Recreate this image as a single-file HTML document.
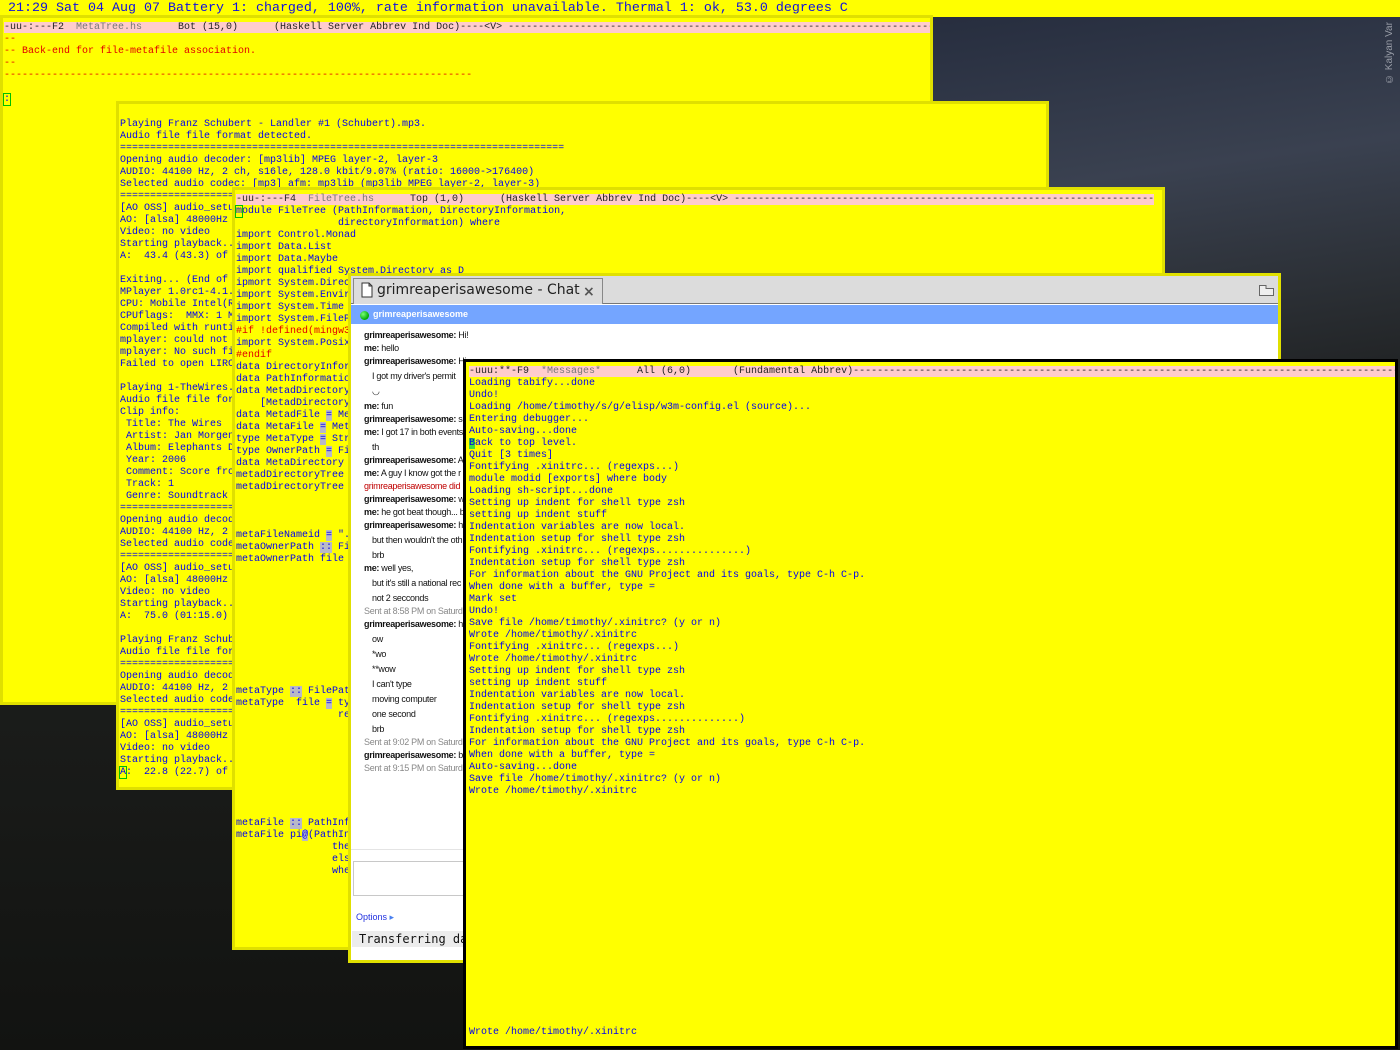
<!DOCTYPE html>
<html><head><meta charset="utf-8"><style>
*{margin:0;padding:0;box-sizing:border-box}
body{width:1400px;height:1050px;overflow:hidden;position:relative;
background:linear-gradient(172deg,#1a1f2e 0,#2a3142 180px,#3a4150 330px,#2a2e33 480px,#1a1b1a 620px,#141513 1050px);
font-family:"Liberation Mono",monospace;}
.hill{position:absolute;left:0;top:560px;width:1400px;height:490px;background:linear-gradient(180deg,#1e201e,#121311);clip-path:polygon(0 30%,10% 26%,25% 22%,40% 28%,60% 40%,80% 52%,100% 60%,100% 100%,0 100%)}
.top{position:absolute;left:0;top:0;width:1400px;height:17px;background:#ffff00;color:#1010e0;font-size:13.33px;line-height:17px;padding-left:8px;white-space:pre}
.win{position:absolute;background:#ffff00;border:3px solid #e0e000;overflow:hidden}
pre{font-family:"Liberation Mono",monospace;font-size:10px;line-height:12px;color:#0000f0;white-space:pre;position:absolute}
.ml{background:#ffcccc;color:#222}
.ml .f{color:#777}
.r{color:#e00000}
.hl{background:#b8b8c8}
.cur{outline:1px solid #00c000}
.chat{position:absolute;left:348px;top:273px;width:933px;height:690px;border:3px solid #e0e000;background:#fff;overflow:hidden}
.cm{position:absolute;left:13px;font-family:"Liberation Sans",sans-serif;font-size:9px;color:#111;white-space:nowrap;letter-spacing:-0.3px}
.cm b{font-weight:bold}
</style></head><body>
<div class="hill"></div>
<div style="position:absolute;left:1384px;top:18px;width:14px;height:66px;color:#9a9ea8;font-family:'Liberation Sans',sans-serif;font-size:10px;writing-mode:vertical-rl;transform:rotate(180deg);white-space:nowrap">© Kalyan Var</div>
<div class="top">21:29 Sat 04 Aug 07 Battery 1: charged, 100%, rate information unavailable. Thermal 1: ok, 53.0 degrees C</div>

<div class="win" style="left:0;top:15px;width:933px;height:690px">
<pre style="left:1px;top:4px"><span class="ml">-uu-:---F2  <span class="f">MetaTree.hs</span>      Bot (15,0)      (Haskell Server Abbrev Ind Doc)----&lt;V&gt; -------------------------------------------------------------------------</span>
<span class="r">--
-- Back-end for file-metafile association.
--
------------------------------------------------------------------------------</span>

<span class="cur">:</span></pre></div>

<div class="win" style="left:116px;top:101px;width:933px;height:689px">
<pre style="left:1px;top:3px">

Playing Franz Schubert - Landler #1 (Schubert).mp3.
Audio file file format detected.
==========================================================================
Opening audio decoder: [mp3lib] MPEG layer-2, layer-3
AUDIO: 44100 Hz, 2 ch, s16le, 128.0 kbit/9.07% (ratio: 16000-&gt;176400)
Selected audio codec: [mp3] afm: mp3lib (mp3lib MPEG layer-2, layer-3)
==========================================================================
[AO OSS] audio_setup: Can't open audio device /dev/dsp
AO: [alsa] 48000Hz 2ch s16le (2 bytes per sample)
Video: no video
Starting playback...
A:  43.4 (43.3) of 196.0 (03:16.0)  0.4%

Exiting... (End of file)
MPlayer 1.0rc1-4.1.2 (C) 2000-2006 MPlayer Team
CPU: Mobile Intel(R) Pentium(R) 4
CPUflags:  MMX: 1 MMX2: 1 3DNow: 0 3DNow2: 0 SSE: 1 SSE2: 1
Compiled with runtime CPU detection.
mplayer: could not connect to socket
mplayer: No such file or directory
Failed to open LIRC support.

Playing 1-TheWires.mp3.
Audio file file format detected.
Clip info:
 Title: The Wires
 Artist: Jan Morgenstern
 Album: Elephants Dream
 Year: 2006
 Comment: Score from the movie
 Track: 1
 Genre: Soundtrack
==========================================================================
Opening audio decoder: [mp3lib] MPEG layer-2, layer-3
AUDIO: 44100 Hz, 2 ch, s16le, 192.0 kbit/13.61%
Selected audio codec: [mp3] afm: mp3lib
==========================================================================
[AO OSS] audio_setup: Can't open audio device
AO: [alsa] 48000Hz 2ch s16le
Video: no video
Starting playback...
A:  75.0 (01:15.0) of 120.0

Playing Franz Schubert - Landler #1 (Schubert).mp3.
Audio file file format detected.
==========================================================================
Opening audio decoder: [mp3lib] MPEG layer-2, layer-3
AUDIO: 44100 Hz, 2 ch, s16le, 128.0 kbit/9.07%
Selected audio codec: [mp3] afm: mp3lib
==========================================================================
[AO OSS] audio_setup: Can't open audio device
AO: [alsa] 48000Hz 2ch s16le
Video: no video
Starting playback...
<span class="cur">A</span>:  22.8 (22.7) of 196.0</pre></div>

<div class="win" style="left:232px;top:187px;width:933px;height:763px">
<pre style="left:1px;top:4px"><span class="ml">-uu-:---F4  <span class="f">FileTree.hs</span>      Top (1,0)      (Haskell Server Abbrev Ind Doc)----&lt;V&gt; ----------------------------------------------------------------------</span>
<span class="cur">m</span>odule FileTree (PathInformation, DirectoryInformation,
                 directoryInformation) where
import Control.Monad
import Data.List
import Data.Maybe
import qualified System.Directory as D
ipmort System.Directory
import System.Environment
import System.Time
import System.FilePath
<span class="r">#if !defined(mingw32_HOST_OS)</span>
import System.Posix
<span class="r">#endif</span>
data DirectoryInformation
data PathInformation
data MetadDirectory
    [MetadDirectory]
data MetadFile <span class="hl">=</span> MetadFile
data MetaFile <span class="hl">=</span> MetaFile
type MetaType <span class="hl">=</span> String
type OwnerPath <span class="hl">=</span> FilePath
data MetaDirectory
metadDirectoryTree
metadDirectoryTree



metaFileNameid <span class="hl">=</span> ".meta"
metaOwnerPath <span class="hl">::</span> FilePath
metaOwnerPath file










metaType <span class="hl">::</span> FilePath
metaType  file <span class="hl">=</span> type
                 return








metaFile <span class="hl">::</span> PathInformation
metaFile pi<span class="hl">@</span>(PathInformation
                the
                else
                where</pre></div>

<div class="chat">
<div style="position:absolute;left:0;top:0;width:930px;height:28px;background:#dcdcdc;border-bottom:1px solid #777"></div>
<div style="position:absolute;left:2px;top:2px;width:250px;height:26px;background:#dcdcdc;border:1px solid #888;border-bottom:none"></div>
<svg style="position:absolute;left:10px;top:6px" width="12" height="16" viewBox="0 0 12 16"><path d="M1 1H8L11 4V15H1Z M8 1V4H11" fill="#fff" stroke="#333" stroke-width="1"/></svg>
<div style="position:absolute;left:26px;top:3px;font-family:'DejaVu Sans',sans-serif;font-size:14px;color:#222;line-height:22px">grimreaperisawesome - Chat</div>
<div style="position:absolute;left:232px;top:5px;font-family:'DejaVu Sans',sans-serif;font-size:14px;color:#555;font-weight:bold;line-height:22px">×</div>
<svg style="position:absolute;left:908px;top:9px" width="15" height="11" viewBox="0 0 15 11"><path d="M0.5 0.5H7V3.5H14.5V10.5H0.5Z" fill="#eee" stroke="#666"/></svg>
<div style="position:absolute;left:0;top:29px;width:930px;height:19px;background:#74a5ff"></div>
<div style="position:absolute;left:9px;top:35px;width:9px;height:9px;border-radius:50%;background:radial-gradient(circle at 35% 35%,#7f7,#0a0 70%)"></div>
<div style="position:absolute;left:22px;top:31px;font-family:'Liberation Sans',sans-serif;font-size:9px;font-weight:bold;color:#fff;line-height:15px">grimreaperisawesome</div>
<div class="cm" style="top:54px"><b>grimreaperisawesome:</b> Hi!</div>
<div class="cm" style="top:67px"><b>me:</b> hello</div>
<div class="cm" style="top:80px"><b>grimreaperisawesome:</b> Hi</div>
<div class="cm" style="top:95px;left:21px">I got my driver's permit</div>
<div class="cm" style="top:110px;left:21px">◡</div>
<div class="cm" style="top:125px"><b>me:</b> fun</div>
<div class="cm" style="top:138px"><b>grimreaperisawesome:</b> sc</div>
<div class="cm" style="top:151px"><b>me:</b> I got 17 in both events</div>
<div class="cm" style="top:166px;left:21px">th</div>
<div class="cm" style="top:179px"><b>grimreaperisawesome:</b> A</div>
<div class="cm" style="top:192px"><b>me:</b> A guy I know got the r</div>
<div class="cm" style="top:205px;color:#c00000">grimreaperisawesome did n</div>
<div class="cm" style="top:218px"><b>grimreaperisawesome:</b> w</div>
<div class="cm" style="top:231px"><b>me:</b> he got beat though... b</div>
<div class="cm" style="top:244px"><b>grimreaperisawesome:</b> h</div>
<div class="cm" style="top:259px;left:21px">but then wouldn't the oth</div>
<div class="cm" style="top:274px;left:21px">brb</div>
<div class="cm" style="top:287px"><b>me:</b> well yes,</div>
<div class="cm" style="top:302px;left:21px">but it's still a national rec</div>
<div class="cm" style="top:317px;left:21px">not 2 secconds</div>
<div class="cm" style="top:330px;color:#888">Sent at 8:58 PM on Saturd</div>
<div class="cm" style="top:343px"><b>grimreaperisawesome:</b> hi</div>
<div class="cm" style="top:358px;left:21px">ow</div>
<div class="cm" style="top:373px;left:21px">*wo</div>
<div class="cm" style="top:388px;left:21px">**wow</div>
<div class="cm" style="top:403px;left:21px">I can't type</div>
<div class="cm" style="top:418px;left:21px">moving computer</div>
<div class="cm" style="top:433px;left:21px">one second</div>
<div class="cm" style="top:448px;left:21px">brb</div>
<div class="cm" style="top:461px;color:#888">Sent at 9:02 PM on Saturd</div>
<div class="cm" style="top:474px"><b>grimreaperisawesome:</b> ba</div>
<div class="cm" style="top:487px;color:#888">Sent at 9:15 PM on Saturd</div>
<div style="position:absolute;left:0;top:573px;width:930px;height:1px;background:#e4e4e4"></div>
<div style="position:absolute;left:2px;top:585px;width:200px;height:35px;border:1px solid #c8c8c8"></div>
<div style="position:absolute;left:5px;top:636px;font-family:'Liberation Sans',sans-serif;font-size:9px;color:#2030e0">Options <span style="color:#4a80f0">▸</span></div>
<div style="position:absolute;left:1px;top:655px;width:929px;height:16px;background:#ececec;font-family:'DejaVu Sans Mono',monospace;font-size:12px;color:#111;line-height:16px;padding-left:7px">Transferring data...</div>
</div>

<div class="win" style="left:463px;top:359px;width:935px;height:690px;border-color:#000">
<pre style="left:3px;top:4px"><span class="ml">-uuu:**-F9  <span class="f">*Messages*</span>      All (6,0)       (Fundamental Abbrev)-------------------------------------------------------------------------------------------</span>
Loading tabify...done
Undo!
Loading /home/timothy/s/g/elisp/w3m-config.el (source)...
Entering debugger...
Auto-saving...done
<span style="background:#40e040">B</span>ack to top level.
Quit [3 times]
Fontifying .xinitrc... (regexps...)
module modid [exports] where body
Loading sh-script...done
Setting up indent for shell type zsh
setting up indent stuff
Indentation variables are now local.
Indentation setup for shell type zsh
Fontifying .xinitrc... (regexps...............)
Indentation setup for shell type zsh
For information about the GNU Project and its goals, type C-h C-p.
When done with a buffer, type =
Mark set
Undo!
Save file /home/timothy/.xinitrc? (y or n)
Wrote /home/timothy/.xinitrc
Fontifying .xinitrc... (regexps...)
Wrote /home/timothy/.xinitrc
Setting up indent for shell type zsh
setting up indent stuff
Indentation variables are now local.
Indentation setup for shell type zsh
Fontifying .xinitrc... (regexps..............)
Indentation setup for shell type zsh
For information about the GNU Project and its goals, type C-h C-p.
When done with a buffer, type =
Auto-saving...done
Save file /home/timothy/.xinitrc? (y or n)
Wrote /home/timothy/.xinitrc</pre>
<pre style="left:3px;top:665px">Wrote /home/timothy/.xinitrc</pre>
</div>
</body></html>
